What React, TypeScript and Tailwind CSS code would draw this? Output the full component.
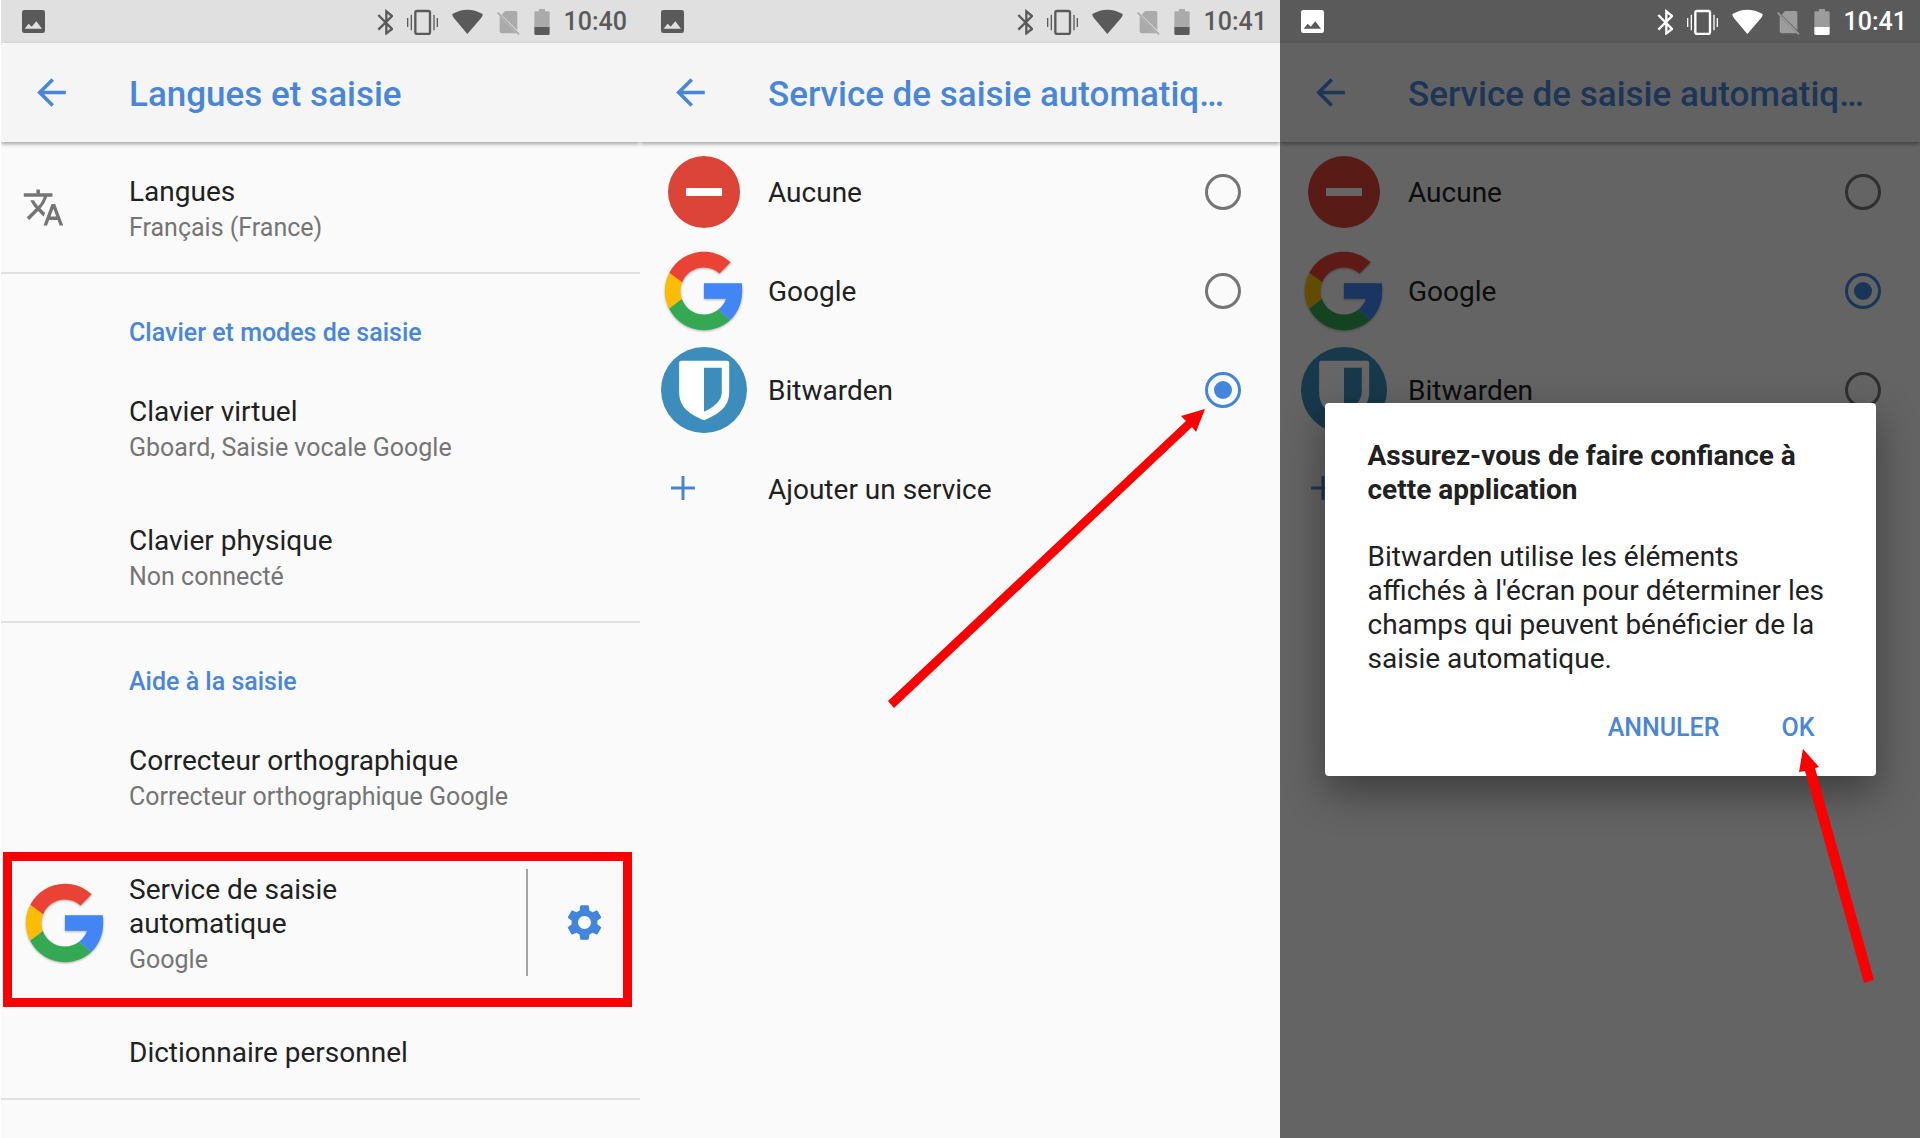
import type { ReactNode } from "react"
import { MdArrowBack, MdSettings, MdTranslate } from "react-icons/md"

type statusBarProps = {
    time: string
    dark?: boolean
}

function StatusBar ({ time, dark = false } : statusBarProps) {

    return (
        <div className={`flex h-[43px] items-center pl-[21px] pr-[13px] ${dark ? "bg-[#5a5a5a] text-white" : "bg-[#e0e0e0] text-[#5a5a5a]"}`}>
            <svg className="h-[23px] w-[23px]" viewBox="0 0 69 69" fill="currentColor" aria-label="Capture d'écran">
                <path fillRule="evenodd" d="M7 0H62Q69 0 69 7V62Q69 69 62 69H7Q0 69 0 62V7Q0 0 7 0ZM8 56H60L43 34L29 50L20 41Z" />
            </svg>
            <div className="ml-auto flex items-center gap-[14px]">
                <svg className="h-[26px] w-4" viewBox="0 0 48 78" fill="none" stroke="currentColor" strokeWidth="7" aria-label="Bluetooth">
                    <path d="M4 18L45 60L28 73V7L45 21L4 62" />
                </svg>
                <svg className="h-[26px] w-[31px]" viewBox="0 0 93 78" fill="none" stroke="currentColor" aria-label="Vibreur">
                    <rect x="25" y="6" width="44" height="69" rx="5" strokeWidth="7" />
                    <path d="M2 27V54M13 17V64M81 17V64M91 27V54" strokeWidth="4" />
                </svg>
                <svg className="h-[26px] w-[31px]" viewBox="0 0 93 78" fill="currentColor" aria-label="Wi-Fi">
                    <path d="M1 15Q46 -11 92 15Q92 22 88 26L46 75L5 26Q1 22 1 15Z" />
                </svg>
                <svg className="h-[26px] w-[23px]" viewBox="0 0 69 78" fill="currentColor" opacity="0.4" aria-label="Pas de carte SIM">
                    <path d="M24 6H56Q61 6 61 11V64L14 17ZM8 22L59 73H14Q8 73 8 67Z" />
                    <path d="M2 11L66 76" fill="none" stroke="currentColor" strokeWidth="5" />
                </svg>
                <svg className="h-[26px] w-4" viewBox="0 0 48 78" fill="currentColor" aria-label="Batterie">
                    <path d="M15 0H33V7H43Q47 7 47 11V54H1V11Q1 7 5 7H15Z" opacity="0.4" />
                    <path d="M1 54H47V74Q47 78 43 78H5Q1 78 1 74Z" />
                </svg>
                <span className="pt-px text-[25px] leading-8 font-medium">{time}</span>
            </div>
        </div>
    )
}

function TitleBar ({ title } : { title: string }) {

    return (
        <header className="flex h-[99px] items-center bg-[#f5f5f5] text-[#4a86d8] shadow-[0_2px_4px_rgba(0,0,0,0.35)]">
            <div className="w-32 shrink-0 pl-[29px]">
                <button type="button" aria-label="Retour" className="block">
                    <MdArrowBack size={43} />
                </button>
            </div>
            <h1 className="pt-[5px] text-[35px] leading-[44px] font-medium whitespace-nowrap">{title}</h1>
        </header>
    )
}

type settingProps = {
    title: string
    summary?: string
    icon?: ReactNode
    action?: ReactNode
    highlighted?: boolean
}

function Setting ({ title, summary, icon, action, highlighted } : settingProps) {

    return (
        <li className="relative flex">
            <div className="flex w-32 shrink-0 items-center">{icon}</div>
            <div className="flex-1 pt-8 pb-7">
                <h3 className="max-w-[360px] text-[28px] leading-[34px] text-[#212121]">{title}</h3>
                {summary && <p className="mt-[3px] text-[25px] leading-8 text-[#757575]">{summary}</p>}
            </div>
            {action}
            {highlighted && <div className="absolute top-[11px] right-2 -bottom-[3px] left-0.5 border-[9px] border-[#fb0000]" />}
        </li>
    )
}

type sectionProps = {
    title: string
    children: ReactNode
}

function Section ({ title, children } : sectionProps) {

    return (
        <section className="border-t-2 border-[#e0e0e0]">
            <h2 className="pt-[43px] pb-[14px] pl-32 text-[25px] leading-8 font-medium text-[#4a86d8]">{title}</h2>
            <ul>{children}</ul>
        </section>
    )
}

function NoneIcon () {
    return (
        <svg className="h-[72px] w-[72px]" viewBox="0 0 72 72" aria-hidden="true">
            <circle cx="36" cy="36" r="36" fill="#db4437" />
            <path d="M18 36H54" stroke="#fff" strokeWidth="8" />
        </svg>
    )
}

function GoogleIcon () {
    return (
        <svg className="h-[94px] w-[94px] drop-shadow-[0_1px_1px_rgba(0,0,0,0.3)]" viewBox="0 0 48 48" aria-hidden="true">
            <path fill="#fbbc05" d="M12.9 19.5L6.3 14.7C4.8 17.5 4 20.6 4 24C4 27.3 4.8 30.4 6.2 33.1L12.7 28.05C12.25 26.8 12 25.4 12 24C12 22.4 12.3 20.9 12.9 19.5Z" />
            <path fill="#ea4335" d="M6.306 14.691l6.571 4.819C14.655 15.108 18.961 12 24 12c3.059 0 5.842 1.154 7.961 3.039l5.657-5.657C34.046 6.053 29.268 4 24 4C16.318 4 9.656 8.337 6.306 14.691z" />
            <path fill="#34a853" d="M24 44c5.166 0 9.86-1.977 13.409-5.192l-6.19-5.238C29.211 35.091 26.715 36 24 36c-5.202 0-9.619-3.317-11.283-7.946l-6.522 5.025C9.505 39.556 16.227 44 24 44z" />
            <path fill="#4285f4" d="M43.3 20H24v8h11.303c-0.792 2.237-2.231 4.166-4.087 5.571l6.19 5.238C41 35.5 43.5 30.5 43.5 24C43.5 22.659 43.5 21.35 43.3 20z" />
        </svg>
    )
}

function BitwardenIcon () {
    return (
        <svg className="h-[86px] w-[86px]" viewBox="0 0 256 256" aria-hidden="true">
            <circle cx="128" cy="128" r="128" fill="#3c8dbc" />
            <path fill="#fff" fillRule="evenodd" d="M60 41H197Q203 41 203 47V134C203 180 170 201 128 218C86 201 54 180 54 134V47Q54 41 60 41ZM128 62V193C158 178 181 162 181 134V62Z" />
        </svg>
    )
}

const services = [
    { name: "Aucune", icon: <NoneIcon /> },
    { name: "Google", icon: <GoogleIcon /> },
    { name: "Bitwarden", icon: <BitwardenIcon /> },
]

function ServiceList ({ group, selected } : { group: string, selected: string }) {

    return (
        <div className="text-[28px] leading-[34px] text-[#212121]">
            {services.map((service) => (
                <label className="flex h-[99px] items-center pr-[39px]" key={service.name}>
                    <span className="flex w-32 shrink-0 justify-center">{service.icon}</span>
                    <span className="flex-1 pt-[3px]">{service.name}</span>
                    <input
                        type="radio"
                        name={group}
                        defaultChecked={service.name === selected}
                        className="h-9 w-9 appearance-none rounded-full border-[3px] border-[#757575] bg-clip-content p-[6px] checked:border-[#4485dc] checked:bg-[#4485dc]"
                    />
                </label>
            ))}
            <button type="button" className="flex h-[98px] w-full items-center text-left">
                <span className="w-32 shrink-0 pl-[31px]">
                    <svg className="h-6 w-6" viewBox="0 0 24 24" stroke="#4a86d8" strokeWidth="3" strokeLinecap="round" aria-hidden="true">
                        <path d="M12 1V23M1 12H23" />
                    </svg>
                </span>
                <span className="pt-[3px]">Ajouter un service</span>
            </button>
        </div>
    )
}

function TrustDialog () {

    return (
        <div role="dialog" aria-labelledby="trust-title" className="w-[551px] rounded bg-white px-[43px] pt-9 pb-8 text-[28px] leading-[34px] text-[#212121] shadow-[0_16px_40px_rgba(0,0,0,0.4)]">
            <h2 id="trust-title" className="font-bold">Assurez-vous de faire confiance à cette application</h2>
            <p className="mt-[33px]">
                Bitwarden utilise les éléments affichés à l'écran pour déterminer les champs qui peuvent bénéficier de la saisie automatique.
            </p>
            <div className="mt-9 flex justify-end gap-[62px] pr-[18px] text-[25px] leading-8 font-medium text-[#4a86d8]">
                <button type="button">ANNULER</button>
                <button type="button">OK</button>
            </div>
        </div>
    )
}

export default function App () {

    return (
        <main className="grid min-h-screen grid-cols-3 bg-[#fafafa] font-['Roboto',sans-serif]">
            <div className="overflow-hidden border-l border-white">
                <StatusBar time="10:40" />
                <TitleBar title="Langues et saisie" />
                <ul className="pt-px">
                    <Setting title="Langues" summary="Français (France)" icon={<MdTranslate size={43} className="ml-[21px] text-[#757575]" />} />
                </ul>
                <Section title="Clavier et modes de saisie">
                    <Setting title="Clavier virtuel" summary="Gboard, Saisie vocale Google" />
                    <Setting title="Clavier physique" summary="Non connecté" />
                </Section>
                <Section title="Aide à la saisie">
                    <Setting title="Correcteur orthographique" summary="Correcteur orthographique Google" />
                    <Setting
                        title="Service de saisie automatique"
                        summary="Google"
                        icon={<div className="ml-[17px]"><GoogleIcon /></div>}
                        action={
                            <div className="my-7 flex w-[114px] items-center justify-center border-l-2 border-[#a3a3a3]">
                                <button type="button" aria-label="Paramètres du service" className="text-[#4485dc]">
                                    <MdSettings size={43} />
                                </button>
                            </div>
                        }
                        highlighted
                    />
                    <Setting title="Dictionnaire personnel" />
                </Section>
                <hr className="border-t-2 border-[#e0e0e0]" />
            </div>

            <div className="relative overflow-hidden">
                <StatusBar time="10:41" />
                <TitleBar title="Service de saisie automatiq…" />
                <ServiceList group="service" selected="Bitwarden" />
                <svg className="pointer-events-none absolute top-[409px] right-[75px] h-[299px] w-[318px]" viewBox="887 409 318 299" fill="#fb0000" aria-hidden="true">
                    <path d="M1205 409L1181 416L1186 421L888 701L894 708L1192 427L1196 432Z" />
                </svg>
            </div>

            <div className="relative flex flex-col overflow-hidden">
                <StatusBar time="10:41" dark />
                <div className="relative flex-1">
                    <TitleBar title="Service de saisie automatiq…" />
                    <ServiceList group="service-dialog" selected="Google" />
                    <div className="absolute inset-0 flex items-center justify-center bg-black/60 pb-0.5">
                        <TrustDialog />
                    </div>
                </div>
                <svg className="pointer-events-none absolute top-[749px] right-[46px] h-[234px] w-[75px]" viewBox="1799 749 75 234" fill="#fb0000" aria-hidden="true">
                    <path d="M1803 749L1799 772L1805 771L1864 983L1874 980L1815 768L1819 767Z" />
                </svg>
            </div>
        </main>
    )
}
